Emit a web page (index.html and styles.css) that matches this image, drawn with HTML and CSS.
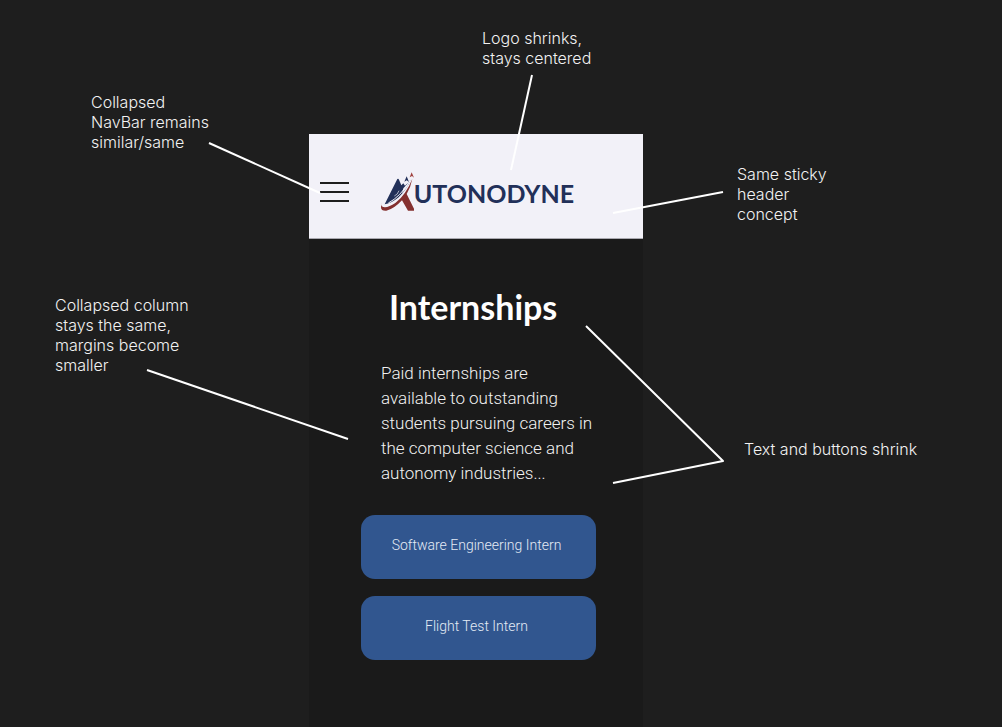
FILE: index.html
```html
<!DOCTYPE html>
<html lang="en">
<head>
<meta charset="utf-8">
<meta name="viewport" content="width=device-width, initial-scale=1">
<title>Autonodyne – Internships</title>
<link rel="stylesheet" href="styles.css">
</head>
<body>
<main class="board">
  <div class="stage">
    <section class="phone">
      <header class="header">
        <button class="menu" type="button" aria-label="Open menu">
          <span class="menu-bar"></span>
          <span class="menu-bar"></span>
          <span class="menu-bar"></span>
        </button>
        <a class="logo" href="#" aria-label="Autonodyne">
          <svg class="logo-mark" viewBox="27 33 102 117" aria-hidden="true">
            <path fill="#223059" d="M41 130 L79 54 Q82 51 84 56 L91 73 L97 67 L102 74 Q112 66 119 56 Q108 83 83 109 Q60 128 41 130Z"/>
            <path fill="#f2f1f8" d="M93 97 Q111 79 119 55 Q112 68 97 82Z"/>
            <path fill="none" stroke="#f2f1f8" stroke-width="3" d="M52 126 Q87 108 118 58"/>
            <path fill="none" stroke="#f2f1f8" stroke-width="2" d="M70 105 Q80 101 84 89"/>
            <path fill="#84302f" d="M33 124 Q27 135 37 138 Q51 141 73 126 Q105 101 124 53 Q119 79 107 99 L132 149 L111 149 L93 118 Q68 145 46 149 Q29 150 30 137 Q30 129 33 124Z"/>
            <path fill="#223059" d="M107 46 L114 63 L107 58 L100 62Z"/>
            <path fill="#a0403d" d="M122 34 L129 50 L123 45 L116 49Z"/>
          </svg>
          <span class="logo-text">UTONODYNE</span>
        </a>
      </header>
      <div class="content">
        <h1 class="title">Internships</h1>
        <p class="intro">Paid internships are<br>available to outstanding<br>students pursuing careers in<br>the computer science and<br>autonomy industries...</p>
        <div class="roles">
          <button class="role" type="button">Software Engineering Intern</button>
          <button class="role" type="button">Flight Test Intern</button>
        </div>
      </div>
    </section>
    <svg class="pointers" viewBox="0 0 334 593" aria-hidden="true">
      <path d="M-100 9 L11 59"/>
      <path d="M223 -59 L202 36"/>
      <path d="M414 58 L304 79"/>
      <path d="M-162 236 L39 305"/>
      <path d="M277 192 L414 327 L304 349"/>
    </svg>
    <p class="note note-nav">Collapsed<br>NavBar remains<br>similar/same</p>
    <p class="note note-logo">Logo shrinks,<br>stays centered</p>
    <p class="note note-header">Same sticky<br>header<br>concept</p>
    <p class="note note-column">Collapsed column<br>stays the same,<br>margins become<br>smaller</p>
    <p class="note note-text">Text and buttons shrink</p>
  </div>
</main>
</body>
</html>
```
FILE: styles.css
```css
* {
  box-sizing: border-box;
}

body {
  margin: 0;
  background: #1e1e1e;
  color: #f2f2f2;
  font-family: Inter, "Liberation Sans", sans-serif;
}

.board {
  display: grid;
  grid-template-columns: 309fr 334px 359fr;
  min-height: 100vh;
  padding-top: 134px;
  overflow: hidden;
}

.stage {
  position: relative;
  grid-column: 2;
  display: grid;
}

.phone {
  background: #1a1a1a;
}

.header {
  display: grid;
  grid-template-columns: 29px 1fr 29px;
  align-items: center;
  padding: 38px 9px 27px 11px;
  background: #f2f1f8;
  border-bottom: 1px solid #aaa9b0;
}

.menu {
  display: grid;
  gap: 7px;
  padding: 0;
  border: 0;
  background: none;
  cursor: pointer;
}

.menu-bar {
  height: 2px;
  background: #1e1e1e;
}

.logo {
  display: flex;
  justify-content: center;
  align-items: center;
  height: 39px;
  color: #223059;
  text-decoration: none;
}

.logo-mark {
  flex: none;
  width: 34px;
  height: 39px;
}

.logo-text {
  padding-top: 2px;
  font: 700 25px/32px Lato, sans-serif;
}

.content {
  padding: 48px 47px 66px 52px;
}

.title {
  margin: 0;
  padding-left: 28px;
  color: #fff;
  font: 700 34px/40px Lato, sans-serif;
}

.intro {
  margin: 34px 0 29px;
  padding-left: 20px;
  font: 300 17px/25px Roboto, sans-serif;
  color: #f2f2f2;
  white-space: nowrap;
}

.roles {
  display: grid;
  gap: 17px;
}

.role {
  height: 64px;
  padding: 0 8px 4px 4px;
  border: 0;
  border-radius: 14px;
  background: #31568f;
  color: #e4ebf5;
  font: 300 14px/20px Roboto, sans-serif;
  cursor: pointer;
}

.pointers {
  position: absolute;
  top: 0;
  left: 0;
  width: 334px;
  height: 593px;
  overflow: visible;
  fill: none;
  stroke: #fff;
  stroke-width: 2;
  stroke-linejoin: round;
  pointer-events: none;
}

.note {
  position: absolute;
  margin: 0;
  font-size: 16px;
  font-weight: 300;
  line-height: 20px;
  white-space: nowrap;
}

.note-nav {
  top: -42px;
  left: -218px;
}

.note-logo {
  top: -106px;
  left: 173px;
}

.note-header {
  top: 30px;
  left: 428px;
}

.note-column {
  top: 161px;
  left: -254px;
}

.note-text {
  top: 305px;
  left: 435px;
}
```
